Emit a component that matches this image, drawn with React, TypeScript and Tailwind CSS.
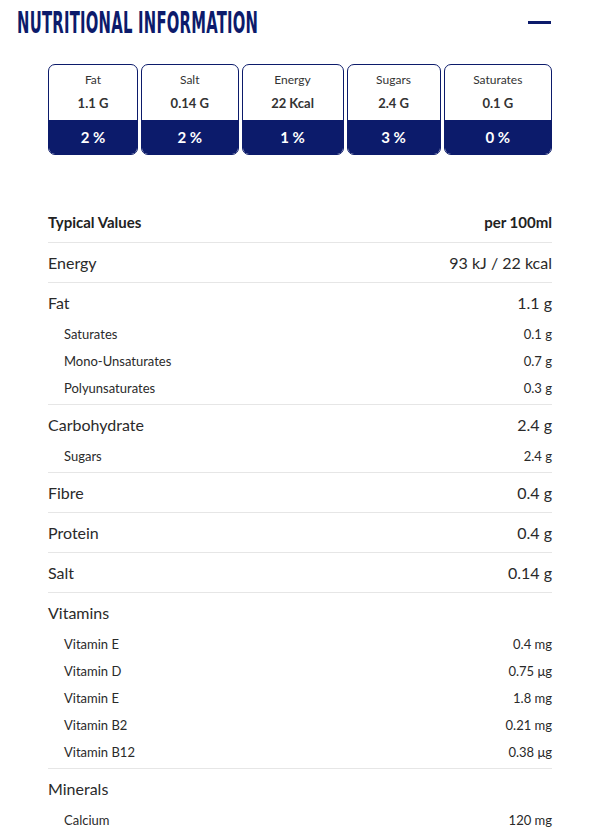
const cards = [
  { label: "Fat", value: "1.1 G", pct: "2 %" },
  { label: "Salt", value: "0.14 G", pct: "2 %" },
  { label: "Energy", value: "22 Kcal", pct: "1 %" },
  { label: "Sugars", value: "2.4 G", pct: "3 %" },
  { label: "Saturates", value: "0.1 G", pct: "0 %" },
];

type Row = { name: string; value?: string; subs?: { name: string; value: string }[] };

const rows: Row[] = [
  { name: "Energy", value: "93 kJ / 22 kcal" },
  {
    name: "Fat",
    value: "1.1 g",
    subs: [
      { name: "Saturates", value: "0.1 g" },
      { name: "Mono-Unsaturates", value: "0.7 g" },
      { name: "Polyunsaturates", value: "0.3 g" },
    ],
  },
  { name: "Carbohydrate", value: "2.4 g", subs: [{ name: "Sugars", value: "2.4 g" }] },
  { name: "Fibre", value: "0.4 g" },
  { name: "Protein", value: "0.4 g" },
  { name: "Salt", value: "0.14 g" },
  {
    name: "Vitamins",
    subs: [
      { name: "Vitamin E", value: "0.4 mg" },
      { name: "Vitamin D", value: "0.75 μg" },
      { name: "Vitamin E", value: "1.8 mg" },
      { name: "Vitamin B2", value: "0.21 mg" },
      { name: "Vitamin B12", value: "0.38 μg" },
    ],
  },
  { name: "Minerals", subs: [{ name: "Calcium", value: "120 mg" }] },
];

export default function App() {
  return (
    <div className="min-h-screen bg-white font-['Lato','Noto_Sans',sans-serif] text-[#2a2a2a]">
      <div className="flex items-center justify-between pl-[17px] pr-[40px] pt-[7px]">
        <h1 className="origin-left scale-x-[0.53] whitespace-nowrap font-['Liberation_Sans_Narrow','DejaVu_Sans_Condensed',sans-serif] text-[31px] font-bold leading-[30px] tracking-[0.5px] text-[#0c1b6b]">
          NUTRITIONAL INFORMATION
        </h1>
        <div className="mt-[1px] h-[3px] w-[23px] bg-[#0c1b6b]" />
      </div>

      <div className="ml-[48px] mr-[39px] mt-[27px] flex gap-[3px]">
        {cards.map((c) => (
          <div
            key={c.label}
            className="flex flex-auto flex-col overflow-hidden rounded-[7px] border border-[#0c1b6b]"
          >
            <div className="flex h-[55px] flex-col items-center pt-[7px]">
              <span className="text-[12px] leading-[16px] text-[#333]">{c.label}</span>
              <span className="mt-[7px] text-[13px] font-bold leading-[16px] text-[#333]">{c.value}</span>
            </div>
            <div className="flex h-[34px] items-center justify-center bg-[#0c1b6b] text-[15px] font-bold text-white">
              {c.pct}
            </div>
          </div>
        ))}
      </div>

      <div className="ml-[48px] mr-[39px] mt-[54px]">
        <div className="flex h-6 items-center justify-between pt-[2px] text-[15px] font-bold text-[#222]">
          <span>Typical Values</span>
          <span>per 100ml</span>
        </div>
        <div className="h-[9px]" />
        {rows.map((r, i) => (
          <div key={i} className={`border-t border-[#e6e6e6] pt-[8px] ${r.subs ? "pb-[2px]" : "pb-[7px]"}`}>
            <div className="flex h-6 items-center justify-between text-[16px]">
              <span>{r.name}</span>
              {r.value && <span>{r.value}</span>}
            </div>
            {r.subs && (
              <div className="pt-[6px]">
                {r.subs.map((s, j) => (
                  <div key={j} className="flex h-[27px] items-center justify-between pl-[16px] text-[13px]">
                    <span>{s.name}</span>
                    <span>{s.value}</span>
                  </div>
                ))}
              </div>
            )}
          </div>
        ))}
      </div>
    </div>
  );
}
